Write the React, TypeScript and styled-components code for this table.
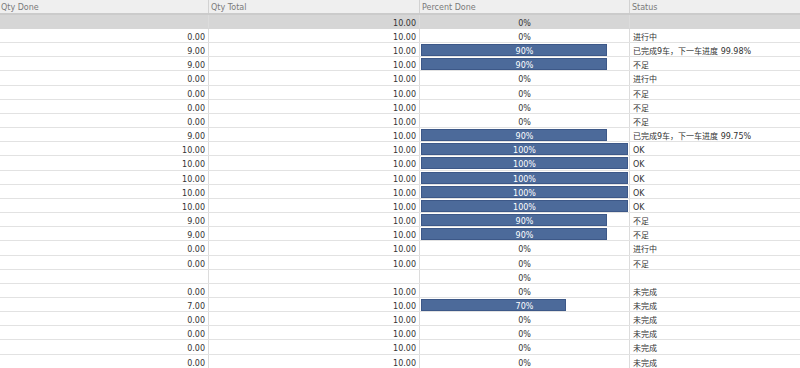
import React from 'react'
import styled, { createGlobalStyle } from 'styled-components'

const GlobalStyle = createGlobalStyle`
    html, body {
        margin: 0;
        padding: 0;
        background: #ffffff;
    }
    body {
        font-family: 'DejaVu Sans', 'Noto Sans CJK SC', sans-serif;
        font-size: 8px;
        color: #333333;
        overflow: hidden;
    }
`

const Grid = styled.div`
    width: 800px;
    height: 368px;
    overflow: hidden;
    display: flex;
    flex-direction: column;
`

const HeaderRow = styled.div`
    display: flex;
    height: 15px;
    flex: none;
    box-sizing: border-box;
    background: #efefef;
    border-bottom: 2px solid #cbcbcb;
`

const HeaderCell = styled.div<{ $w?: number }>`
    ${({ $w }) => ($w ? `width: ${$w}px; flex: none;` : 'flex: 1;')}
    box-sizing: border-box;
    padding-left: 2px;
    line-height: 16px;
    overflow: hidden;
    color: #7a7a7a;
    border-right: 1px solid #d2d2d2;
    white-space: nowrap;
    &:first-child {
        padding-left: 1px;
    }
    &:last-child {
        border-right: none;
    }
`

const Row = styled.div<{ $summary?: boolean }>`
    display: flex;
    flex: none;
    box-sizing: border-box;
    height: ${({ $summary }) => ($summary ? '14px' : '14.17px')};
    background: ${({ $summary }) => ($summary ? '#d6d6d6' : '#ffffff')};
    border-bottom: 1px solid ${({ $summary }) => ($summary ? '#d6d6d6' : '#e2e2e2')};
`

const Cell = styled.div<{ $w?: number; $align?: 'left' | 'right' | 'center' }>`
    ${({ $w }) => ($w ? `width: ${$w}px; flex: none;` : 'flex: 1;')}
    box-sizing: border-box;
    text-align: ${({ $align }) => $align || 'left'};
    padding: 0 3px;
    line-height: 18px;
    white-space: nowrap;
    overflow: hidden;
    border-right: 1px solid #dcdcdc;
    &:last-child {
        border-right: none;
    }
`

const StatusCell = styled(Cell)`
    padding-left: 3px;
`

const PercentCell = styled.div`
    width: 210px;
    flex: none;
    box-sizing: border-box;
    position: relative;
    overflow: hidden;
    padding: 1px 1px 0 1px;
    border-right: 1px solid #dcdcdc;
`

const Bar = styled.div`
    height: 12px;
    box-sizing: border-box;
    background: #4c6a9a;
    border: 1px solid #3d5888;
`

const BarLabel = styled.span<{ $filled: boolean }>`
    position: absolute;
    left: 0;
    right: 0;
    top: 0;
    line-height: 18px;
    text-align: center;
    color: ${({ $filled }) => ($filled ? '#ffffff' : '#333333')};
`

type Item = {
    done?: string
    total?: string
    pct: number
    status?: string
}

const DONE9 = '已完成9车，下一车进度'

const rows: Item[] = [
    { done: '0.00', total: '10.00', pct: 0, status: '进行中' },
    { done: '9.00', total: '10.00', pct: 90, status: `${DONE9} 99.98%` },
    { done: '9.00', total: '10.00', pct: 90, status: '不足' },
    { done: '0.00', total: '10.00', pct: 0, status: '进行中' },
    { done: '0.00', total: '10.00', pct: 0, status: '不足' },
    { done: '0.00', total: '10.00', pct: 0, status: '不足' },
    { done: '0.00', total: '10.00', pct: 0, status: '不足' },
    { done: '9.00', total: '10.00', pct: 90, status: `${DONE9} 99.75%` },
    { done: '10.00', total: '10.00', pct: 100, status: 'OK' },
    { done: '10.00', total: '10.00', pct: 100, status: 'OK' },
    { done: '10.00', total: '10.00', pct: 100, status: 'OK' },
    { done: '10.00', total: '10.00', pct: 100, status: 'OK' },
    { done: '10.00', total: '10.00', pct: 100, status: 'OK' },
    { done: '9.00', total: '10.00', pct: 90, status: '不足' },
    { done: '9.00', total: '10.00', pct: 90, status: '不足' },
    { done: '0.00', total: '10.00', pct: 0, status: '进行中' },
    { done: '0.00', total: '10.00', pct: 0, status: '不足' },
    { pct: 0 },
    { done: '0.00', total: '10.00', pct: 0, status: '未完成' },
    { done: '7.00', total: '10.00', pct: 70, status: '未完成' },
    { done: '0.00', total: '10.00', pct: 0, status: '未完成' },
    { done: '0.00', total: '10.00', pct: 0, status: '未完成' },
    { done: '0.00', total: '10.00', pct: 0, status: '未完成' },
    { done: '0.00', total: '10.00', pct: 0, status: '未完成' },
]

const Percent = ({ pct }: { pct: number }) => (
    <PercentCell>
        {pct > 0 && <Bar style={{ width: `${pct}%` }} />}
        <BarLabel $filled={pct > 0}>{pct}%</BarLabel>
    </PercentCell>
)

export default function App() {
    return (
        <>
            <GlobalStyle />
            <Grid>
                <HeaderRow>
                    <HeaderCell $w={209}>Qty Done</HeaderCell>
                    <HeaderCell $w={211}>Qty Total</HeaderCell>
                    <HeaderCell $w={210}>Percent Done</HeaderCell>
                    <HeaderCell>Status</HeaderCell>
                </HeaderRow>
                <Row $summary>
                    <Cell $w={209} $align="right" />
                    <Cell $w={211} $align="right">
                        10.00
                    </Cell>
                    <Percent pct={0} />
                    <StatusCell />
                </Row>
                {rows.map((r, i) => (
                    <Row key={i}>
                        <Cell $w={209} $align="right">
                            {r.done}
                        </Cell>
                        <Cell $w={211} $align="right">
                            {r.total}
                        </Cell>
                        <Percent pct={r.pct} />
                        <StatusCell>{r.status}</StatusCell>
                    </Row>
                ))}
            </Grid>
        </>
    )
}
